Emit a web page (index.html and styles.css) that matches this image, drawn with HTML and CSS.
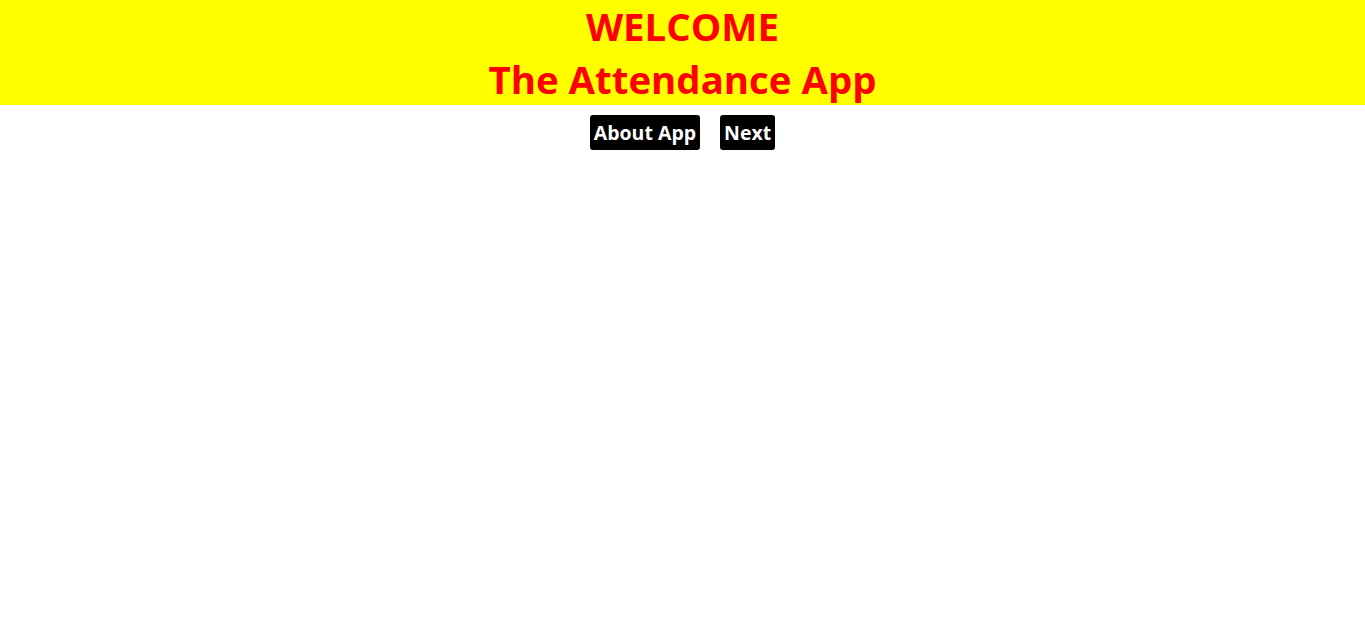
FILE: index.html
```html
<!DOCTYPE html>
<html>
<head>
<meta charset="utf-8">
<link rel="stylesheet" href="styles.css">
</head>
<body>
<header class="banner">
  <h1 class="title">WELCOME</h1>
  <h1 class="title">The Attendance App</h1>
</header>
<nav class="actions">
  <button class="btn">About App</button>
  <button class="btn">Next</button>
</nav>
</body>
</html>
```
FILE: styles.css
```css
html, body {
  margin: 0;
  padding: 0;
  background: #fff;
}
body {
  font-family: "Open Sans", "Noto Sans", sans-serif;
}
.banner {
  background: #ffff00;
  height: 105px;
  text-align: center;
}
.title {
  margin: 0;
  color: #ff0000;
  font-size: 38.4px;
  font-weight: 700;
  line-height: 53px;
}
.actions {
  display: flex;
  justify-content: center;
  gap: 20px;
  margin-top: 10px;
}
.btn {
  font-family: "Open Sans", "Noto Sans", sans-serif;
  font-weight: 700;
  font-size: 19.5px;
  color: #fff;
  background: #000;
  border: none;
  border-radius: 3px;
  padding: 0 4px;
  height: 35px;
  line-height: 35px;
}
```
